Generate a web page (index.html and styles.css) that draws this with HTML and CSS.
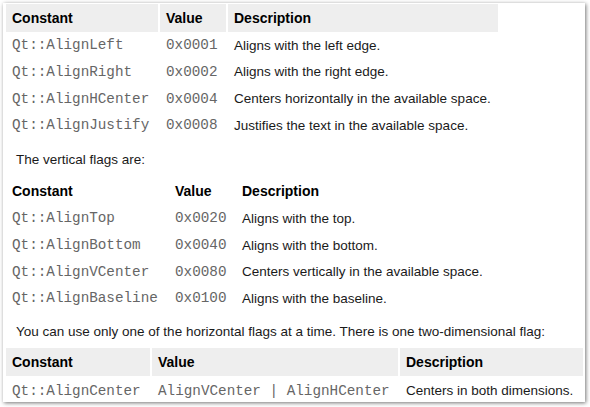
FILE: index.html
```html
<!DOCTYPE html>
<html>
<head>
<meta charset="utf-8">
<link rel="stylesheet" href="styles.css">
</head>
<body>
<div class="card">
  <div class="tbl t1">
    <div class="th">Constant</div><div class="th">Value</div><div class="th">Description</div>
    <div class="td mono">Qt::AlignLeft</div><div class="td mono">0x0001</div><div class="td">Aligns with the left edge.</div>
    <div class="td mono">Qt::AlignRight</div><div class="td mono">0x0002</div><div class="td">Aligns with the right edge.</div>
    <div class="td mono">Qt::AlignHCenter</div><div class="td mono">0x0004</div><div class="td">Centers horizontally in the available space.</div>
    <div class="td mono">Qt::AlignJustify</div><div class="td mono">0x0008</div><div class="td">Justifies the text in the available space.</div>
  </div>
  <p class="para">The vertical flags are:</p>
  <div class="tbl t2">
    <div class="th plain">Constant</div><div class="th plain">Value</div><div class="th plain">Description</div>
    <div class="td mono">Qt::AlignTop</div><div class="td mono">0x0020</div><div class="td">Aligns with the top.</div>
    <div class="td mono">Qt::AlignBottom</div><div class="td mono">0x0040</div><div class="td">Aligns with the bottom.</div>
    <div class="td mono">Qt::AlignVCenter</div><div class="td mono">0x0080</div><div class="td">Centers vertically in the available space.</div>
    <div class="td mono">Qt::AlignBaseline</div><div class="td mono">0x0100</div><div class="td">Aligns with the baseline.</div>
  </div>
  <p class="para p2">You can use only one of the horizontal flags at a time. There is one two-dimensional flag:</p>
  <div class="tbl t3">
    <div class="th">Constant</div><div class="th">Value</div><div class="th">Description</div>
    <div class="td mono">Qt::AlignCenter</div><div class="td mono">AlignVCenter | AlignHCenter</div><div class="td">Centers in both dimensions.</div>
  </div>
</div>
</body>
</html>
```
FILE: styles.css
```css
html, body {
  margin: 0;
  padding: 0;
  background: #ffffff;
}
body {
  width: 590px;
  height: 407px;
  overflow: hidden;
  font-family: "Liberation Sans", Arial, sans-serif;
}
.card {
  position: relative;
  margin: 3px 0 0 3px;
  width: 582px;
  height: 399px;
  background: #ffffff;
  box-shadow: 1px 1px 4px rgba(0, 0, 0, 0.55);
  padding: 1px 0 0 3px;
  box-sizing: border-box;
  overflow: hidden;
}
.tbl {
  display: grid;
  column-gap: 2px;
  grid-auto-rows: 26.67px;
}
.t1 { grid-template-columns: 152px 66px 270px; grid-template-rows: 28px; }
.t2 { grid-template-columns: 161px 65px 270px; grid-template-rows: 28px; }
.t3 { grid-template-columns: 144px 246px 183px; grid-template-rows: 28px; }
.th {
  background: #eeeeee;
  font-weight: bold;
  font-size: 14px;
  color: #000;
  padding: 0 6px;
  display: flex;
  align-items: center;
}
.th.plain { background: transparent; }
.td {
  font-size: 13.5px;
  color: #1a1a1a;
  padding: 0 6px;
  display: flex;
  align-items: center;
  white-space: nowrap;
}
.td.mono {
  font-family: "Liberation Mono", "Courier New", monospace;
  font-size: 14.3px;
  color: #666666;
}
.t2 .td { padding-top: 1px; }
.t3 .td { padding-top: 2px; }
.para {
  margin: 0;
  padding: 12px 0 8px 10px;
  font-size: 13.5px;
  line-height: 18px;
  color: #1a1a1a;
}
.p2 { padding-bottom: 7px; }
```
